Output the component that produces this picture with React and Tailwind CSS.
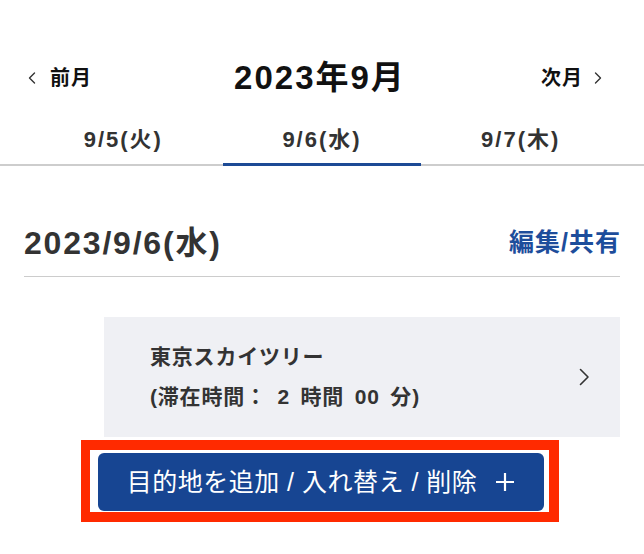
import React from "react";

const Chevron = ({ dir = "right", className = "" }) => (
  <svg width="8" height="12" viewBox="0 0 8 12" className={className} fill="none">
    {dir === "right" ? (
      <path d="M1.5 1 L6.5 6 L1.5 11" stroke="#333" strokeWidth="1.4" strokeLinecap="round" strokeLinejoin="round" />
    ) : (
      <path d="M6.5 1 L1.5 6 L6.5 11" stroke="#333" strokeWidth="1.4" strokeLinecap="round" strokeLinejoin="round" />
    )}
  </svg>
);

export default function App() {
  const tabs = ["9/5(火)", "9/6(水)", "9/7(木)"];
  return (
    <div className="w-[644px] h-[554px] bg-white overflow-hidden font-['Liberation_Sans','Noto_Sans_CJK_JP',sans-serif]">
      {/* month header */}
      <div className="grid grid-cols-[1fr_auto_1fr] items-center mt-[58px] h-[40px] pl-[28px] pr-[32px]">
        <div className="flex items-center gap-[14px]">
          <Chevron dir="left" />
          <span className="text-[20px] font-bold text-[#111] tracking-[1px]">前月</span>
        </div>
        <div className="text-[33px] font-bold text-[#111] leading-[40px] tracking-[2px]">2023年9月</div>
        <div className="flex items-center justify-end gap-[11px] pr-[10px]">
          <span className="text-[20px] font-bold text-[#111] tracking-[1px]">次月</span>
          <Chevron dir="right" />
        </div>
      </div>

      {/* day tabs */}
      <div className="flex px-6 border-b-2 border-[#cdcdcd]">
        {tabs.map((t, i) => (
          <div
            key={t}
            className={
              "flex-1 text-center pt-[28px] pb-[9px] -mb-[2px] border-b-[3px] text-[22px] font-semibold leading-[28px] tracking-[2px] text-[#333] " +
              (i === 1 ? "border-[#1d4a95]" : "border-transparent")
            }
          >
            {t}
          </div>
        ))}
      </div>

      {/* content */}
      <div className="px-6">
        <div className="flex items-center justify-between mt-[57px] pb-[13px] border-b border-[#cccccc]">
          <span className="text-[32px] leading-[40px] font-bold tracking-[1.8px] text-[#333]">2023/9/6(水)</span>
          <span className="text-[25px] font-bold tracking-[1px] text-[#1d4d9b] -mr-[1px]">編集/共有</span>
        </div>

        <div className="ml-[80px] mt-[40px] h-[120px] bg-[#eff0f4] flex items-center justify-between pl-[46px] pr-[30px]">
          <div className="text-[21px] font-bold text-[#333] leading-[40px] tracking-[0.8px]">
            <div>東京スカイツリー</div>
            <div className="[word-spacing:4px]">(滞在時間： 2 時間 00 分)</div>
          </div>
          <svg width="11" height="18" viewBox="0 0 11 18" fill="none">
            <path d="M1.5 1.5 L9 9 L1.5 16.5" stroke="#333" strokeWidth="1.6" strokeLinecap="round" strokeLinejoin="round" />
          </svg>
        </div>

        <div className="ml-[57px] mt-[3px] w-[478px] h-[82px] border-[10px] border-l-[9px] border-[#ff2a00] pt-[3px] pl-[8px] pr-[5px] pb-[1px]">
          <div className="h-[58px] rounded-[6px] bg-[#174592] flex items-center justify-center gap-[18px] text-white">
            <span className="text-[25px] leading-none tracking-[0.5px]">目的地を追加 / 入れ替え / 削除</span>
            <svg width="20" height="20" viewBox="0 0 20 20" fill="none">
              <path d="M10 1 V19 M1 10 H19" stroke="#fff" strokeWidth="2.2" />
            </svg>
          </div>
        </div>
      </div>
    </div>
  );
}
